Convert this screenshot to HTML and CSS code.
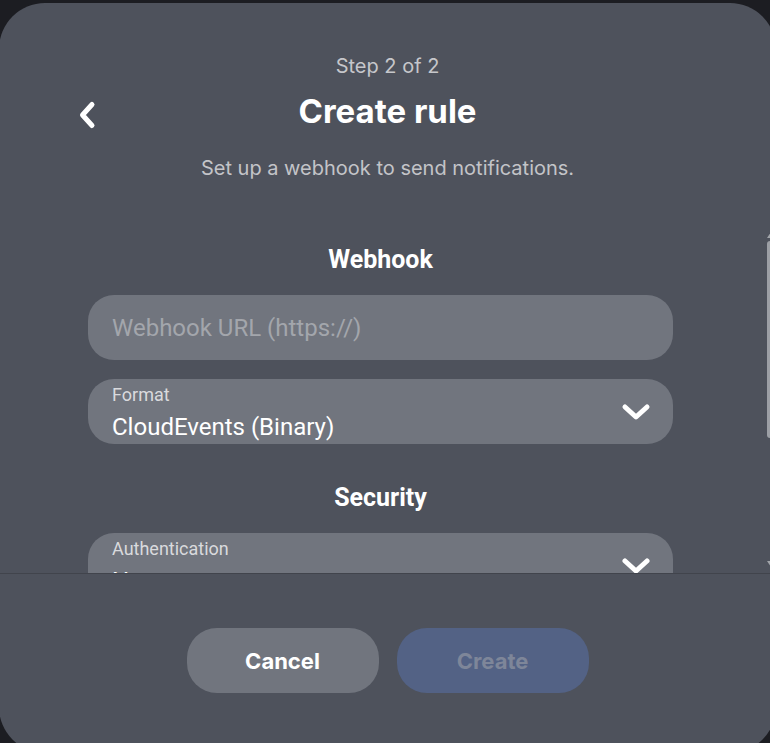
FILE: index.html
```html
<!DOCTYPE html>
<html>
<head>
<meta charset="utf-8">
<link rel="stylesheet" href="styles.css">
</head>
<body>
<div class="dialog">
  <header class="head">
    <div class="step">Step 2 of 2</div>
    <div class="title-row">
      <div class="back">
        <svg width="20" height="30" viewBox="0 0 20 30"><path d="M15 4.5 L5.5 15 L15 25.5" fill="none" stroke="#fff" stroke-width="5" stroke-linecap="round" stroke-linejoin="round"/></svg>
      </div>
      <h1 class="title">Create rule</h1>
      <div></div>
    </div>
    <p class="subtitle">Set up a webhook to send notifications.</p>
  </header>
  <div class="scroll">
    <div class="scroll-content">
      <h2 class="section">Webhook</h2>
      <div class="field">
        <span class="placeholder">Webhook URL (https://)</span>
      </div>
      <div class="field select">
        <div class="sel-text">
          <span class="label">Format</span>
          <span class="value">CloudEvents (Binary)</span>
        </div>
        <svg class="chev" width="30" height="18" viewBox="0 0 30 18"><path d="M4 4 L15 14 L26 4" fill="none" stroke="#fff" stroke-width="5" stroke-linecap="round" stroke-linejoin="round"/></svg>
      </div>
      <h2 class="section security">Security</h2>
      <div class="field select">
        <div class="sel-text">
          <span class="label">Authentication</span>
          <span class="value">None</span>
        </div>
        <svg class="chev" width="30" height="18" viewBox="0 0 30 18"><path d="M4 4 L15 14 L26 4" fill="none" stroke="#fff" stroke-width="5" stroke-linecap="round" stroke-linejoin="round"/></svg>
      </div>
    </div>
    <div class="scrollbar">
      <div class="arrow up"></div>
      <div class="thumb"></div>
      <div class="spacer"></div>
      <div class="arrow down"></div>
    </div>
  </div>
  <footer class="foot">
    <button class="btn cancel">Cancel</button>
    <button class="btn create">Create</button>
  </footer>
</div>
</body>
</html>
```
FILE: styles.css
```css
html, body {
  margin: 0;
  padding: 0;
  overflow: hidden;
  height: 743px;
}
body {
  background: #1c1d22;
  font-family: Inter, "Noto Sans", sans-serif;
}
.dialog {
  margin: 3px 0 0 -1px;
  width: 777px;
  height: 750px;
  background: #4e525c;
  border-radius: 46px;
  display: flex;
  flex-direction: column;
  overflow: hidden;
}
.head {
  padding-top: 51px;
  text-align: center;
}
.step {
  font-size: 20px;
  line-height: 24px;
  color: #c6c7cb;
}
.title-row {
  display: grid;
  grid-template-columns: 1fr auto 1fr;
  align-items: center;
  margin-top: 13px;
}
.back {
  padding-left: 78px;
  display: flex;
  align-items: center;
  padding-top: 8px;
}
.title {
  margin: 0;
  font-size: 33px;
  line-height: 40px;
  font-weight: 700;
  color: #ffffff;
}
.subtitle {
  margin: 25px 0 0;
  font-size: 20px;
  line-height: 24px;
  color: #c3c4c8;
}
.scroll {
  height: 393px;
  display: flex;
  border-bottom: 1px solid #41444c;
  overflow: hidden;
}
.scroll-content {
  flex: 1;
  padding: 0 89px 0 89px;
  display: flex;
  flex-direction: column;
}
.section {
  margin: 66px 0 21px;
  text-align: center;
  font-family: Roboto, "Noto Sans", sans-serif;
  font-size: 25px;
  line-height: 28px;
  font-weight: 700;
  color: #ffffff;
}
.section.security {
  margin-top: 40px;
  margin-bottom: 21px;
}
.field {
  flex: none;
  height: 65px;
  background: #71757e;
  border-radius: 26px;
  display: flex;
  align-items: center;
  padding: 0 22px 0 24px;
  font-family: Roboto, "Noto Sans", sans-serif;
}
.field + .field {
  margin-top: 19px;
}
.placeholder {
  font-size: 24px;
  color: #a3a6ac;
}
.select {
  justify-content: space-between;
}
.sel-text {
  display: flex;
  flex-direction: column;
  align-self: flex-start;
  padding-top: 5px;
}
.label {
  font-size: 18px;
  line-height: 22px;
  color: #d9dadd;
}
.value {
  font-size: 24px;
  line-height: 28px;
  margin-top: 7px;
  color: #ffffff;
}
.chev {
  margin-top: 0;
}
.scrollbar {
  width: 14px;
  display: flex;
  flex-direction: column;
  padding-top: 52px;
  padding-left: 5px;
  box-sizing: border-box;
}
.arrow {
  width: 0;
  height: 0;
  border-left: 4px solid transparent;
  border-right: 4px solid transparent;
}
.arrow.up {
  border-bottom: 6px solid #a2a5aa;
}
.arrow.down {
  border-top: 6px solid #a2a5aa;
  margin-bottom: 6px;
}
.thumb {
  margin-top: 3px;
  height: 197px;
  width: 9px;
  border-radius: 3px;
  background: #9c9fa5;
}
.spacer {
  flex: 1;
}
.foot {
  display: flex;
  justify-content: center;
  gap: 18px;
  padding-top: 54px;
}
.btn {
  width: 192px;
  height: 65px;
  border: none;
  border-radius: 30px;
  font-family: Inter, "Noto Sans", sans-serif;
  font-size: 22px;
  font-weight: 700;
}
.cancel {
  background: #71757e;
  color: #ffffff;
}
.create {
  background: #536285;
  color: #7e8699;
}
```
